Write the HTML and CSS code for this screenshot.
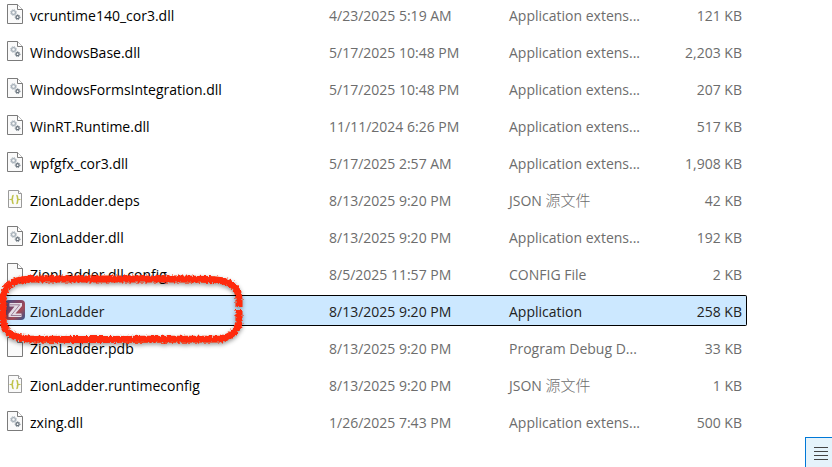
FILE: index.html
```html
<!DOCTYPE html>
<html lang="en">
<head>
    <meta charset="UTF-8">
    <meta name="viewport" content="width=device-width, initial-scale=1.0">
    <title>ZionLadder</title>
    <link rel="stylesheet" href="styles.css">
</head>
<body>
    <svg class="sprite" aria-hidden="true">
        <symbol id="icon-blank" viewBox="0 0 20 20">
            <path d="M2.5 .5h10l5 5v14h-15z" fill="#fafafa" stroke="#7b7b7b"/>
            <path d="M12.5 .5v5h5" fill="#fff" stroke="#7b7b7b"/>
        </symbol>
        <symbol id="icon-dll" viewBox="0 0 20 20">
            <path d="M2.5 .5h10l5 5v14h-15z" fill="#fafafa" stroke="#7b7b7b"/>
            <path d="M12.5 .5v5h5" fill="#fff" stroke="#7b7b7b"/>
            <circle cx="8.500" cy="8.500" r="1.900" fill="none" stroke="#a3adb6" stroke-width="1.200"/>
            <circle cx="8.500" cy="8.500" r="2.900" fill="none" stroke="#a3adb6" stroke-width="1" stroke-dasharray="1.150 1.120"/>
            <circle cx="12.600" cy="13.200" r="1.500" fill="none" stroke="#66717b" stroke-width="1.200"/>
            <circle cx="12.600" cy="13.200" r="2.400" fill="none" stroke="#66717b" stroke-width="1" stroke-dasharray=".950 .930"/>
        </symbol>
        <symbol id="icon-json" viewBox="0 0 20 20">
            <path d="M3.5 1.5h10l3 3v14h-13z" fill="#fafafa" stroke="#9a9a9a"/>
            <path d="M13.5 1.5v3h3" fill="#fff" stroke="#9a9a9a"/>
            <path d="M8.700 6.500c-1.200 0-1.200.4-1.200 1.500v1.200c0 .8-.3 1.100-1 1.300.7.2 1 .5 1 1.300V13c0 1.100 0 1.500 1.200 1.500M11.300 6.500c1.200 0 1.200.4 1.200 1.500v1.200c0 .8.3 1.100 1 1.300-.7.2-1 .5-1 1.300V13c0 1.100 0 1.500-1.200 1.500" fill="none" stroke="#bfc24a" stroke-width="1.500"/>
        </symbol>
        <symbol id="icon-app" viewBox="0 0 20 20">
            <linearGradient id="app-fill" x1="0" y1="0" x2="1" y2="1">
                <stop offset="0" stop-color="#44558c"/>
                <stop offset=".35" stop-color="#7a4468"/>
                <stop offset=".65" stop-color="#a04a58"/>
                <stop offset="1" stop-color="#2f5792"/>
            </linearGradient>
            <rect width="20" height="20" rx="4" fill="url(#app-fill)"/>
            <path d="M4.500 3h12.500v3l-6.500 7.500h6V17h-13v-3L9.500 6.500h-5z" fill="#e4dce6"/>
            <path d="M5 4.800h9.700L6 15.500h10" fill="none" stroke="#8c6484" stroke-width=".8"/>
        </symbol>
    </svg>

    <main class="file-view">
        <table class="files">
            <colgroup>
                <col class="col-name">
                <col class="col-date">
                <col class="col-type">
                <col class="col-size">
            </colgroup>
            <tbody>
                <tr>
                    <td><span class="name"><svg class="icon"><use href="#icon-dll"/></svg>vcruntime140_cor3.dll</span></td>
                    <td>4/23/2025 5:19 AM</td>
                    <td>Application extens...</td>
                    <td>121 KB</td>
                </tr>
                <tr>
                    <td><span class="name"><svg class="icon"><use href="#icon-dll"/></svg>WindowsBase.dll</span></td>
                    <td>5/17/2025 10:48 PM</td>
                    <td>Application extens...</td>
                    <td>2,203 KB</td>
                </tr>
                <tr>
                    <td><span class="name"><svg class="icon"><use href="#icon-dll"/></svg>WindowsFormsIntegration.dll</span></td>
                    <td>5/17/2025 10:48 PM</td>
                    <td>Application extens...</td>
                    <td>207 KB</td>
                </tr>
                <tr>
                    <td><span class="name"><svg class="icon"><use href="#icon-dll"/></svg>WinRT.Runtime.dll</span></td>
                    <td>11/11/2024 6:26 PM</td>
                    <td>Application extens...</td>
                    <td>517 KB</td>
                </tr>
                <tr>
                    <td><span class="name"><svg class="icon"><use href="#icon-dll"/></svg>wpfgfx_cor3.dll</span></td>
                    <td>5/17/2025 2:57 AM</td>
                    <td>Application extens...</td>
                    <td>1,908 KB</td>
                </tr>
                <tr>
                    <td><span class="name"><svg class="icon"><use href="#icon-json"/></svg>ZionLadder.deps</span></td>
                    <td>8/13/2025 9:20 PM</td>
                    <td>JSON <span class="cjk" lang="zh-CN">源文件</span></td>
                    <td>42 KB</td>
                </tr>
                <tr>
                    <td><span class="name"><svg class="icon"><use href="#icon-dll"/></svg>ZionLadder.dll</span></td>
                    <td>8/13/2025 9:20 PM</td>
                    <td>Application extens...</td>
                    <td>192 KB</td>
                </tr>
                <tr>
                    <td><span class="name"><svg class="icon"><use href="#icon-blank"/></svg>ZionLadder.dll.config</span></td>
                    <td>8/5/2025 11:57 PM</td>
                    <td>CONFIG File</td>
                    <td>2 KB</td>
                </tr>
                <tr class="selected">
                    <td>
                        <span class="name"><svg class="icon"><use href="#icon-app"/></svg>ZionLadder</span>
                        <svg class="marker" viewBox="0 0 250 80" aria-hidden="true">
                            <filter id="rough" x="-5%" y="-10%" width="110%" height="120%">
                                <feTurbulence type="fractalNoise" baseFrequency=".5" numOctaves="2" seed="4"/>
                                <feDisplacementMap in="SourceGraphic" scale="5" xChannelSelector="R" yChannelSelector="G"/>
                            </filter>
                            <path d="M239 32V25C239 16 234 8 223 6C216 4 200 4 180 4H34C18 4 5 7 3 22V43C3 56 10 63 29 64C80 65 150 64 222 64C232 61 239 54 239 46V35" fill="none" stroke="#ff2c08" stroke-width="7" filter="url(#rough)"/>
                        </svg>
                    </td>
                    <td>8/13/2025 9:20 PM</td>
                    <td>Application</td>
                    <td>258 KB</td>
                </tr>
                <tr>
                    <td><span class="name"><svg class="icon"><use href="#icon-blank"/></svg>ZionLadder.pdb</span></td>
                    <td>8/13/2025 9:20 PM</td>
                    <td>Program Debug D...</td>
                    <td>33 KB</td>
                </tr>
                <tr>
                    <td><span class="name"><svg class="icon"><use href="#icon-json"/></svg>ZionLadder.runtimeconfig</span></td>
                    <td>8/13/2025 9:20 PM</td>
                    <td>JSON <span class="cjk" lang="zh-CN">源文件</span></td>
                    <td>1 KB</td>
                </tr>
                <tr>
                    <td><span class="name"><svg class="icon"><use href="#icon-dll"/></svg>zxing.dll</span></td>
                    <td>1/26/2025 7:43 PM</td>
                    <td>Application extens...</td>
                    <td>500 KB</td>
                </tr>
            </tbody>
        </table>
    </main>

    <footer class="status-bar">
        <button type="button" class="view-btn" aria-label="Details view">
            <svg width="14" height="14" viewBox="0 0 14 14">
                <path d="M0 .5h14M0 4.500h14M0 8.500h14M0 12.500h14" stroke="#444"/>
            </svg>
        </button>
    </footer>
</body>
</html>
```
FILE: styles.css
```css
* {
    box-sizing: border-box;
}
body {
    margin: 0;
    background-color: #fff;
    font-family: 'Open Sans', 'Noto Sans CJK SC', sans-serif;
    font-size: 14px;
    line-height: 20px;
    overflow: hidden;
}
.sprite {
    position: absolute;
    width: 0;
    height: 0;
}
.file-view {
    margin-top: -7px;
}
.files {
    width: 747px;
    max-width: 100%;
    table-layout: fixed;
    border-collapse: separate;
    border-spacing: 0 6px;
    color: #6d6d6d;
}
.col-name {
    width: 329px;
}
.col-date {
    width: 180px;
}
.col-type {
    width: 150px;
}
.files td {
    height: 31px;
    padding: 2px 0 0;
    border: solid transparent;
    border-width: 1px 0;
    white-space: nowrap;
}
.files td:first-child {
    position: relative;
    padding-left: 5px;
    color: #000;
}
.files td:last-child {
    padding-right: 4px;
    border-right-width: 1px;
    border-radius: 0 2px 2px 0;
    text-align: right;
}
.files .selected td {
    background-color: #cce8ff;
    border-color: #000;
    color: #222;
}
.name {
    display: flex;
    align-items: center;
    gap: 5px;
}
.icon {
    width: 20px;
    height: 20px;
    margin-bottom: 4px;
}
.cjk {
    font-family: 'Noto Sans CJK SC', sans-serif;
    font-size: 15px;
    font-weight: 300;
    line-height: 1;
}
/* red hand-drawn ring round the selected file */
.marker {
    position: absolute;
    top: -21px;
    left: 0;
    width: 250px;
    height: 80px;
    overflow: visible;
    filter: drop-shadow(0 2px 2px rgba(0, 0, 0, 0.4));
    z-index: 1;
    pointer-events: none;
}
.status-bar {
    display: flex;
    justify-content: flex-end;
    margin-top: -6px;
}
.view-btn {
    display: flex;
    width: 27px;
    height: 30px;
    padding: 9px 8px;
    border: solid #0078d7;
    border-width: 1px 0 0 1px;
    background-color: #e5f3fb;
}
.view-btn svg {
    flex: none;
}
```
